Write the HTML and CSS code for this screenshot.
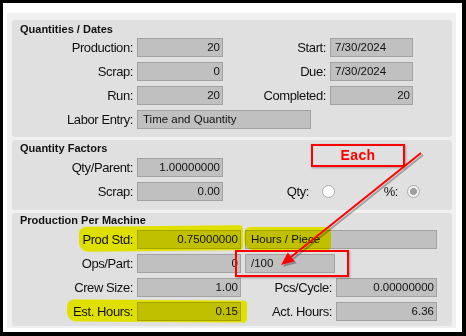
FILE: index.html
```html
<!DOCTYPE html>
<html>
<head>
<meta charset="utf-8">
<link rel="stylesheet" href="styles.css">
</head>
<body>
<div class="frame">
  <div class="panel">
    <section class="group g1">
      <div class="title">Quantities / Dates</div>
      <div class="grid grid1">
        <span class="lbl">Production:</span><div class="field num">20</div>
        <span class="lbl">Start:</span><div class="field">7/30/2024</div>
        <span class="lbl">Scrap:</span><div class="field num">0</div>
        <span class="lbl">Due:</span><div class="field">7/30/2024</div>
        <span class="lbl">Run:</span><div class="field num">20</div>
        <span class="lbl">Completed:</span><div class="field num">20</div>
        <span class="lbl">Labor Entry:</span><div class="field labor">Time and Quantity</div>
      </div>
    </section>
    <section class="group g2">
      <div class="title">Quantity Factors</div>
      <div class="grid grid2">
        <span class="lbl">Qty/Parent:</span><div class="field num">1.00000000</div><span></span>
        <span class="lbl">Scrap:</span><div class="field num">0.00</div>
        <div class="radios">
          <span class="lbl rl1">Qty:</span><span class="radio"></span>
          <span class="lbl rl2">%:</span><span class="radio on"></span>
        </div>
      </div>
    </section>
    <section class="group g3">
      <div class="title">Production Per Machine</div>
      <div class="grid grid3">
        <span class="lbl">Prod Std:</span><div class="field num">0.75000000</div>
        <div class="field wide">Hours / Piece</div>
        <span class="lbl">Ops/Part:</span><div class="field num">0</div>
        <div class="field per">/100</div>
        <span class="lbl">Crew Size:</span><div class="field num">1.00</div>
        <span class="lbl">Pcs/Cycle:</span><div class="field num">0.00000000</div>
        <span class="lbl">Est. Hours:</span><div class="field num">0.15</div>
        <span class="lbl">Act. Hours:</span><div class="field num">6.36</div>
      </div>
    </section>
  </div>

  <div class="hl hl1"></div>
  <div class="hl hl2"></div>
  <div class="hl hl3"></div>

  <div class="annot each">Each</div>
  <div class="annot box100"></div>
  <svg class="arrow" width="466" height="336" viewBox="0 0 466 336">
    <g transform="translate(2 2)" opacity="0.28">
      <line x1="421" y1="153" x2="291" y2="257" stroke="#000" stroke-width="2"/>
      <polygon points="281,265 294.6,261.2 287.8,252.6" fill="#000"/>
    </g>
    <line x1="421" y1="153" x2="291" y2="257" stroke="#ff0000" stroke-width="2"/>
    <polygon points="281,265 294.6,261.2 287.8,252.6" fill="#ff0000"/>
  </svg>
</div>
</body>
</html>
```
FILE: styles.css
```css
html, body {
  margin: 0;
  padding: 0;
}
body {
  font-family: "Liberation Sans", Arial, sans-serif;
  color: #111;
}
.frame {
  position: relative;
  width: 466px;
  height: 336px;
  box-sizing: border-box;
  border-style: solid;
  border-color: #000;
  border-width: 3px 4px 4px 3px;
  background: #fff;
  padding: 10px 6px 4px 4px;
}
.panel {
  height: 100%;
  box-sizing: border-box;
  background: #f0f0f0;
  padding: 7px 4px 2px 5px;
  display: flex;
  flex-direction: column;
  gap: 3px;
}
.group {
  background: #e0e0e0;
  border-radius: 3px;
  padding: 3px 8px 8px 8px;
}
.g2 { padding-top: 2px; padding-bottom: 9px; }
.g3 { padding-top: 1px; padding-bottom: 5px; }
.title {
  font-weight: bold;
  font-size: 11px;
  line-height: 13px;
  height: 13px;
  margin-bottom: 2px;
}
.g2 .title, .g3 .title { margin-bottom: 3px; }
.grid {
  display: grid;
  column-gap: 4px;
  row-gap: 5px;
  grid-auto-rows: 19px;
  align-items: center;
}
.grid1 { grid-template-columns: 113px 86px 99px 83px; }
.grid2 { grid-template-columns: 113px 86px 1fr; }
.grid3 { grid-template-columns: 113px 104px 87px 101px; }
.lbl {
  font-size: 13px;
  letter-spacing: -0.4px;
  text-align: right;
  white-space: nowrap;
  line-height: 15px;
}
.field {
  height: 19px;
  box-sizing: border-box;
  background: #c0c0c0;
  border: 1px solid #a2a2a2;
  font-size: 11.5px;
  line-height: 17px;
  padding: 0 2px 0 4px;
  white-space: nowrap;
  overflow: hidden;
  color: #111;
}
.field.num { text-align: right; }
.labor {
  grid-column: 2 / 5;
  width: 174px;
  justify-self: start;
  padding-left: 5px;
}
.wide {
  grid-column: 3 / 5;
  padding-left: 5px;
}
.per {
  grid-column: 3 / 5;
  width: 90px;
  justify-self: start;
  padding-left: 5px;
}
.radios {
  display: flex;
  align-items: center;
  height: 19px;
}
.rl1 { width: 82px; }
.rl2 { width: 63px; }
.radio {
  width: 13px;
  height: 13px;
  box-sizing: border-box;
  border-radius: 50%;
  border: 1px solid #aaa;
  background: #fff;
  margin-left: 13px;
}
.rl2 + .radio { margin-left: 9px; }
.radio.on {
  background: radial-gradient(circle, #9e9e9e 0 3.2px, #f2f2f2 3.8px);
}
.hl {
  position: absolute;
  background: #ffff00;
  mix-blend-mode: multiply;
  border-radius: 7px 4px 4px 9px;
  filter: blur(0.6px);
}
.hl1 { left: 76px; top: 223px; width: 164px; height: 25px; transform: rotate(-0.6deg); }
.hl2 { left: 241px; top: 224px; width: 87px; height: 23px; }
.hl3 { left: 64px; top: 297px; width: 180px; height: 22px; transform: rotate(0.4deg); }
.annot {
  position: absolute;
  box-sizing: border-box;
  border: 2px solid #ff0000;
  box-shadow: 1px 1px 2px rgba(0, 0, 0, 0.3);
}
.each {
  left: 308px;
  top: 141px;
  width: 94px;
  height: 23px;
  color: #ff0000;
  font-weight: bold;
  font-size: 14px;
  line-height: 19px;
  text-align: center;
  letter-spacing: 0.4px;
}
.box100 {
  left: 232px;
  top: 247px;
  width: 114px;
  height: 27px;
}
.arrow {
  position: absolute;
  left: -3px;
  top: -3px;
  pointer-events: none;
}
```
